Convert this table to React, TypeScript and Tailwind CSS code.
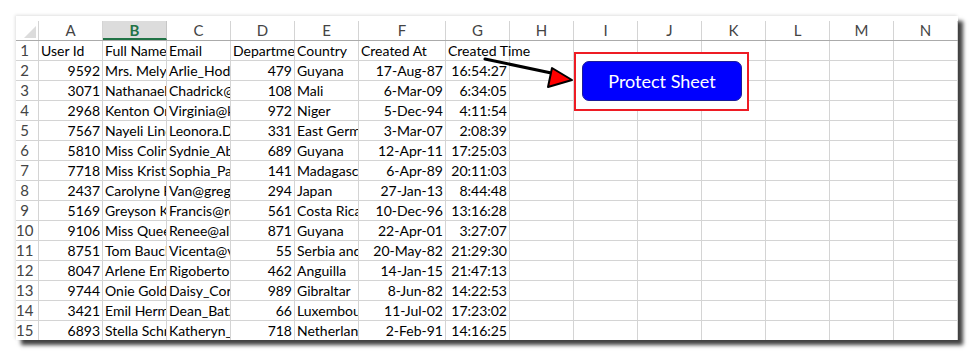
import React from 'react';

const cols = ['A', 'B', 'C', 'D', 'E', 'F', 'G', 'H', 'I', 'J', 'K', 'L', 'M', 'N'];
const widths = [64, 64, 64, 64, 64, 87, 64, 64, 64, 64, 64, 64, 64, 64];

// [id, name, email, dept, country, createdAt, createdTime] - text past the cell edge is clipped like Excel
const rows: string[][] = [
  ['9592', 'Mrs. Melyn', 'Arlie_Hodk', '479', 'Guyana', '17-Aug-87', '16:54:27'],
  ['3071', 'Nathanael', 'Chadrick@k', '108', 'Mali', '6-Mar-09', '6:34:05'],
  ['2968', 'Kenton Ort', 'Virginia@k', '972', 'Niger', '5-Dec-94', '4:11:54'],
  ['7567', 'Nayeli Lind', 'Leonora.Da', '331', 'East Germa', '3-Mar-07', '2:08:39'],
  ['5810', 'Miss Colin', 'Sydnie_Ab', '689', 'Guyana', '12-Apr-11', '17:25:03'],
  ['7718', 'Miss Kristy', 'Sophia_Pa', '141', 'Madagasca', '6-Apr-89', '20:11:03'],
  ['2437', 'Carolyne H', 'Van@grego', '294', 'Japan', '27-Jan-13', '8:44:48'],
  ['5169', 'Greyson Ku', 'Francis@ro', '561', 'Costa Rica', '10-Dec-96', '13:16:28'],
  ['9106', 'Miss Queen', 'Renee@ali', '871', 'Guyana', '22-Apr-01', '3:27:07'],
  ['8751', 'Tom Bauch', 'Vicenta@v', '55', 'Serbia and', '20-May-82', '21:29:30'],
  ['8047', 'Arlene Emm', 'Rigoberto', '462', 'Anguilla', '14-Jan-15', '21:47:13'],
  ['9744', 'Onie Goldn', 'Daisy_Corw', '989', 'Gibraltar', '8-Jun-82', '14:22:53'],
  ['3421', 'Emil Herma', 'Dean_Batz', '66', 'Luxembou', '11-Jul-02', '17:23:02'],
  ['6893', 'Stella Schm', 'Katheryn_M', '718', 'Netherland', '2-Feb-91', '14:16:25'],
];

const header = ['User Id', 'Full Name', 'Email', 'Departmen', 'Country', 'Created At', 'Created Time'];
const rightAligned = [0, 3, 5, 6];

function Cell({ w, children, right, overflow }: { w: number; children?: React.ReactNode; right?: boolean; overflow?: boolean }) {
  return (
    <div
      style={{ width: w }}
      className={`h-[20px] shrink-0 border-r border-b border-[#d4d4d4] px-[2px] leading-[19px] whitespace-nowrap ${
        overflow ? 'overflow-visible relative z-10' : 'overflow-hidden'
      } ${right ? 'text-right' : 'text-left'}`}
    >
      {children}
    </div>
  );
}

export default function App() {
  return (
    <div className="w-[975px] h-[356px] bg-white pl-[16px] pt-[16px] font-['Lato',sans-serif] text-[14px] text-black">
      <div className="relative w-[942px] h-[324px] bg-white overflow-hidden shadow-[5px_5px_4px_rgba(0,0,0,0.75),-1px_-1px_3px_rgba(0,0,0,0.12)]">
        <div className="pt-[5px]">
          {/* column headers */}
          <div className="flex h-[20px] border-b border-[#ababab]">
            <div className="w-[23px] shrink-0 h-[19px] border-r border-[#d4d4d4] relative">
              <div className="absolute right-[2px] bottom-[2px] w-0 h-0 border-l-[12px] border-l-transparent border-b-[12px] border-b-[#dcdcdc]" />
            </div>
            {cols.map((c, i) =>
              c === 'B' ? (
                <div
                  key={c}
                  style={{ width: widths[i] }}
                  className="shrink-0 h-[19px] bg-[#dcdcdc] border-r border-[#c6c6c6] border-b-2 border-b-[#217346] text-center font-bold text-[15px] text-[#217346] leading-[18px]"
                >
                  {c}
                </div>
              ) : (
                <div
                  key={c}
                  style={{ width: widths[i] }}
                  className="shrink-0 h-[19px] border-r border-[#d4d4d4] text-center text-[15px] text-[#444] leading-[18px]"
                >
                  {c}
                </div>
              )
            )}
          </div>

          {/* header row */}
          <div className="flex">
            <div className="w-[23px] shrink-0 h-[20px] border-r border-b border-[#d4d4d4] pr-[5px] text-center text-[15px] text-[#444] leading-[19px]">1</div>
            {widths.map((w, i) => (
              <Cell key={i} w={w} overflow={i === 6}>
                {header[i]}
              </Cell>
            ))}
          </div>

          {rows.map((r, ri) => (
            <div key={ri} className="flex">
              <div className="w-[23px] shrink-0 h-[20px] border-r border-b border-[#d4d4d4] pr-[5px] text-center text-[15px] text-[#444] leading-[19px]">
                {ri + 2}
              </div>
              {widths.map((w, i) => (
                <Cell key={i} w={w} right={rightAligned.includes(i)}>
                  {r[i]}
                </Cell>
              ))}
            </div>
          ))}
        </div>

        {/* button with highlight box */}
        <div className="absolute left-[558px] top-[36px] w-[175px] h-[59px] border-2 border-[#ee1c24] bg-white z-20 p-[7px] pl-[6px]">
          <div className="w-[160px] h-[40px] rounded-[7px] bg-[#0000ff] border border-[#1a1a9a] flex items-center justify-center text-white text-[18px]">
            Protect Sheet
          </div>
        </div>

        {/* arrow */}
        <svg className="absolute left-0 top-0 z-30" width="942" height="324" viewBox="0 0 942 324">
          <line x1="469" y1="43" x2="540" y2="58" stroke="#000" strokeWidth="3" strokeLinecap="round" />
          <polygon points="556,64 536,52 532,71" fill="#ff0000" stroke="#000" strokeWidth="2" strokeLinejoin="round" />
        </svg>
      </div>
    </div>
  );
}
